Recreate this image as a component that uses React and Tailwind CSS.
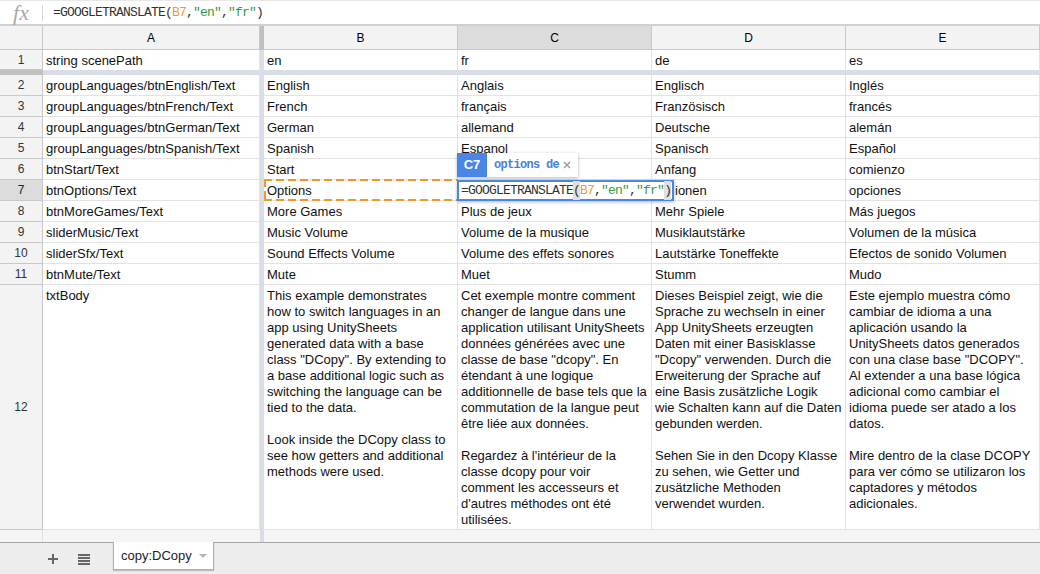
import React from "react";

const rows = [
  ["groupLanguages/btnEnglish/Text", "English", "Anglais", "Englisch", "Inglés"],
  ["groupLanguages/btnFrench/Text", "French", "français", "Französisch", "francés"],
  ["groupLanguages/btnGerman/Text", "German", "allemand", "Deutsche", "alemán"],
  ["groupLanguages/btnSpanish/Text", "Spanish", "Espanol", "Spanisch", "Español"],
  ["btnStart/Text", "Start", "", "Anfang", "comienzo"],
  ["btnOptions/Text", "Options", "", "", "opciones"],
  ["btnMoreGames/Text", "More Games", "Plus de jeux", "Mehr Spiele", "Más juegos"],
  ["sliderMusic/Text", "Music Volume", "Volume de la musique", "Musiklautstärke", "Volumen de la música"],
  ["sliderSfx/Text", "Sound Effects Volume", "Volume des effets sonores", "Lautstärke Toneffekte", "Efectos de sonido Volumen"],
  ["btnMute/Text", "Mute", "Muet", "Stumm", "Mudo"],
];

const body = [
  `This example demonstrates\nhow to switch languages in an\napp using UnitySheets\ngenerated data with a base\nclass "DCopy". By extending to\na base additional logic such as\nswitching the language can be\ntied to the data.\n\nLook inside the DCopy class to\nsee how getters and additional\nmethods were used.`,
  `Cet exemple montre comment\nchanger de langue dans une\napplication utilisant UnitySheets\ndonnées générées avec une\nclasse de base "dcopy". En\nétendant à une logique\nadditionnelle de base tels que la\ncommutation de la langue peut\nêtre liée aux données.\n\nRegardez à l'intérieur de la\nclasse dcopy pour voir\ncomment les accesseurs et\nd'autres méthodes ont été\nutilisées.`,
  `Dieses Beispiel zeigt, wie die\nSprache zu wechseln in einer\nApp UnitySheets erzeugten\nDaten mit einer Basisklasse\n"Dcopy" verwenden. Durch die\nErweiterung der Sprache auf\neine Basis zusätzliche Logik\nwie Schalten kann auf die Daten\ngebunden werden.\n\nSehen Sie in den Dcopy Klasse\nzu sehen, wie Getter und\nzusätzliche Methoden\nverwendet wurden.`,
  `Este ejemplo muestra cómo\ncambiar de idioma a una\naplicación usando la\nUnitySheets datos generados\ncon una clase base "DCOPY".\nAl extender a una base lógica\nadicional como cambiar el\nidioma puede ser atado a los\ndatos.\n\nMire dentro de la clase DCOPY\npara ver cómo se utilizaron los\ncaptadores y métodos\nadicionales.`,
];

const cols = "grid grid-cols-[43px_217px_4px_194px_194px_194px_194px]";
const cell = "border-r border-b border-[#e2e2e2] px-[3px] pt-px overflow-hidden whitespace-nowrap";
const rowHead = "border-r border-b border-[#c8c8c8] bg-[#f3f3f3] flex items-center justify-center text-[12px] text-[#333]";
const dashH = "absolute left-0 right-0 h-[2px] bg-[repeating-linear-gradient(90deg,#f09a2b_0,#f09a2b_8px,transparent_8px,transparent_12px)]";
const dashV = "absolute top-0 bottom-0 w-[2px] bg-[repeating-linear-gradient(180deg,#f09a2b_0,#f09a2b_8px,transparent_8px,transparent_12px)]";
const mono = "font-['Liberation_Mono',monospace]";

function Freeze() {
  return <div className="bg-[#d9dde6]" />;
}

function Row({ n, values, active }) {
  return (
    <div className={`${cols} grid-rows-[21px] h-[21px] leading-[20px]`}>
      <div className={active ? "border-r border-b border-[#c8c8c8] bg-[#dcdcdc] flex items-center justify-center text-[12px] text-[#222]" : rowHead}>{n}</div>
      <div className={cell}>{values[0]}</div>
      <Freeze />
      {values.slice(1).map((v, i) => (
        <div key={i} className={cell}>{v}</div>
      ))}
    </div>
  );
}

export default function App() {
  return (
    <div className="relative h-[574px] w-[1040px] overflow-hidden bg-white font-['Liberation_Sans',Arial,sans-serif] text-[13px] text-[#111]">
      <div className="h-[26px] flex items-center border-b-2 border-[#d0d0d0] border-t border-t-[#e8e8e8]">
        <div className="w-[42px] shrink-0 flex items-center justify-center font-['Liberation_Serif',serif] italic text-[22px] text-[#a8a8a8] leading-none">fx</div>
        <div className="w-px h-[16px] bg-[#d8d8d8]" />
        <div className={`pl-[10px] ${mono} text-[13px] tracking-[-0.8px] text-[#333] whitespace-nowrap`}>
          =GOOGLETRANSLATE(<span className="text-[#f09a2b]">B7</span>,<span className="text-[#3a9a3a]">"en"</span>,<span className="text-[#3a9a3a]">"fr"</span>)
        </div>
      </div>

      <div className={`${cols} h-[24px]`}>
        <div className="bg-[#f3f3f3] border-r border-b border-[#c8c8c8]" />
        <div className="bg-[#f3f3f3] border-r border-b border-[#c8c8c8] flex items-center justify-center text-[12px] text-black">A</div>
        <div className="bg-[#c0c0c0]" />
        {["B", "C", "D", "E"].map((c) => (
          <div key={c} className={`${c === "C" ? "bg-[#dcdcdc]" : "bg-[#f3f3f3]"} border-r border-b border-[#c8c8c8] flex items-center justify-center text-[12px] text-black`}>{c}</div>
        ))}
      </div>

      <div className={`${cols} grid-rows-[20px] h-[20px] leading-[20px]`}>
        <div className={rowHead}>1</div>
        <div className="border-r border-[#e2e2e2] px-[3px] pt-px overflow-hidden">string scenePath</div>
        <Freeze />
        {["en", "fr", "de", "es"].map((v) => (
          <div key={v} className="border-r border-[#e2e2e2] px-[3px] pt-px overflow-hidden">{v}</div>
        ))}
      </div>
      <div className="h-[5px] flex">
        <div className="w-[43px] bg-[#c0c0c0]" />
        <div className="flex-1 bg-[#d9dde6]" />
      </div>

      {rows.map((r, i) => (
        <Row key={i} n={i + 2} values={r} active={i === 5} />
      ))}

      <div className={`${cols} h-[245px]`}>
        <div className={rowHead}>12</div>
        <div className="border-r border-b border-[#e2e2e2] px-[3px] pt-[3px] leading-[16px]">txtBody</div>
        <Freeze />
        {body.map((t, i) => (
          <div key={i} className="border-r border-b border-[#e2e2e2] px-[3px] pt-[3px] leading-[16px] whitespace-pre overflow-hidden">{t}</div>
        ))}
      </div>

      <div className={`${cols} h-[12px]`}>
        <div className="bg-[#f5f5f5] border-r border-[#e2e2e2]" />
        <div className="bg-[#f5f5f5]" />
        <Freeze />
        <div className="col-span-4 bg-[#f5f5f5]" />
      </div>

      <div className="h-[33px] bg-[#ededed] border-t border-[#a8a8a8] flex items-start">
        <div className="w-[113px] h-full flex items-center pl-[48px] gap-[20px] text-[#666]">
          <svg width="10" height="10" viewBox="0 0 10 10" className="shrink-0"><path d="M4 0h2v4h4v2H6v4H4V6H0V4h4z" fill="#666" /></svg>
          <svg width="12" height="11" viewBox="0 0 12 11" className="shrink-0"><path d="M0 0h12v2H0zM0 3h12v2H0zM0 6h12v2H0zM0 9h12v2H0z" fill="#666" /></svg>
        </div>
        <div className="relative -top-px h-[28px] w-[101px] bg-white border-x border-b border-[#b0b0b0] shadow-[0_1px_1px_rgba(0,0,0,0.2)] flex items-center pl-[7px] text-[13px] text-[#222]">
          copy:DCopy
          <svg width="8" height="4" viewBox="0 0 8 4" className="ml-[7px]"><path d="M0 0h8L4 4z" fill="#b4b4b4" /></svg>
        </div>
      </div>

      {/* Optionen, clipped under the editor */}
      <div className="absolute left-[675px] top-[180px] w-[40px] overflow-hidden leading-[21px] whitespace-nowrap">ionen</div>

      {/* copy marquee */}
      <div className="absolute left-[264px] top-[179px] h-[22px] w-[194px]">
        <div className={`${dashH} top-0`} />
        <div className={`${dashH} bottom-0`} />
        <div className={`${dashV} left-0`} />
      </div>

      {/* cell name chip */}
      <div className="absolute left-[457px] top-[153px] h-[24px] flex items-center bg-white shadow-[0_1px_3px_rgba(0,0,0,0.3)]">
        <div className="w-[30px] h-full bg-[#4a86e8] text-white font-bold text-[13px] flex items-center justify-center">C7</div>
        <div className={`pl-[7px] ${mono} font-bold text-[12px] tracking-[-0.7px] text-[#4a7fd8] whitespace-nowrap`}>options de</div>
        <svg width="8" height="8" viewBox="0 0 8 8" className="ml-[4px] mr-[7px]"><path d="M1 1l6 6M7 1l-6 6" stroke="#999" strokeWidth="1.4" /></svg>
      </div>

      {/* active editor */}
      <div className={`absolute left-[457px] top-[180px] h-[21px] w-[217px] bg-white border-2 border-[#4a86e8] shadow-[0_1px_3px_rgba(0,0,0,0.3)] pl-[2px] flex items-center ${mono} text-[13px] tracking-[-0.8px] text-[#333] whitespace-nowrap`}>
        =GOOGLETRANSLATE<span className="bg-[#e0e0e0]">(</span><span className="text-[#f09a2b]">B7</span>,<span className="text-[#3a9a3a]">"en"</span>,<span className="text-[#3a9a3a]">"fr"</span><span className="bg-[#e0e0e0]">)</span>
      </div>
    </div>
  );
}
